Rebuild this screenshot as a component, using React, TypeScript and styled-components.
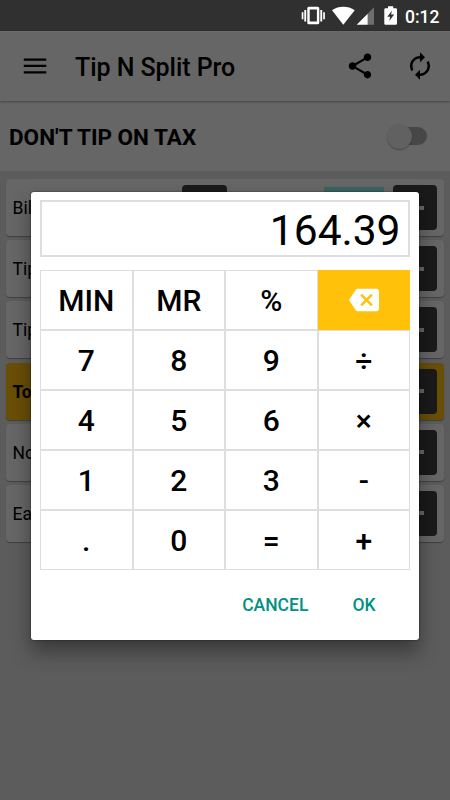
import React from "react";
import styled, { createGlobalStyle } from "styled-components";

const GlobalStyle = createGlobalStyle`
  * { box-sizing: border-box; }
  body { margin: 0; font-family: Roboto, sans-serif; color: #000; }
`;

const Screen = styled.div`
  position: relative;
  width: 450px;
  height: 800px;
  overflow: hidden;
  background: #5c5c5c;
`;

const StatusBar = styled.header`
  height: 31px;
  padding-right: 10px;
  display: flex;
  align-items: center;
  justify-content: flex-end;
  background: #303030;
  color: #fff;
`;

const Clock = styled.span`
  width: 35px;
  margin-left: 5px;
  padding-top: 2px;
  font-size: 17.5px;
  font-weight: 500;
  line-height: 20px;
  white-space: nowrap;
`;

const StatusIcons = styled.svg`
  display: block;
  flex: none;
  width: 100px;
  height: 31px;
`;

const AppBar = styled.div`
  position: relative;
  height: 70px;
  padding: 0 15px 1px 20px;
  display: flex;
  align-items: center;
  background: #666;
  border-top: 1px solid #6b6b6b;
  box-shadow: 0 1px 2px rgba(0, 0, 0, 0.35);
`;

const AppTitle = styled.h1`
  margin: 3px auto 0 25px;
  font-size: 25px;
  line-height: 30px;
  font-weight: 500;
  letter-spacing: -0.05px;
`;

const Icon = styled.svg<{ $size: number; $gap?: number }>`
  display: block;
  flex: none;
  width: ${(p) => p.$size}px;
  height: ${(p) => p.$size}px;
  margin-left: ${(p) => p.$gap ?? 0}px;
  fill: currentColor;
`;

const TaxBar = styled.div`
  height: 70px;
  padding: 2px 22px 0 9px;
  display: flex;
  align-items: center;
  justify-content: space-between;
  background: #666;
  font-size: 22.5px;
  font-weight: 700;
`;

const SwitchTrack = styled.div`
  width: 36px;
  height: 18px;
  margin-right: 1px;
  margin-top: -2px;
  border-radius: 9px;
  display: flex;
  align-items: center;
  background: #474747;
`;

const SwitchThumb = styled.div`
  width: 25px;
  height: 25px;
  margin-left: -4px;
  flex: none;
  border-radius: 50%;
  background: #616161;
  box-shadow: 0 1px 1.5px rgba(0, 0, 0, 0.3);
`;

const Rows = styled.div`
  padding: 8px 6.5px 0 6px;
  display: flex;
  flex-direction: column;
  gap: 4.2px;
`;

const Row = styled.div<{ $accent?: boolean }>`
  height: 57px;
  padding: 0 6.5px;
  display: flex;
  align-items: center;
  border-radius: 4px;
  background: ${(p) => (p.$accent ? "#694e06" : "#666")};
  font-size: 17.5px;
  font-weight: ${(p) => (p.$accent ? 700 : 400)};
  box-shadow: 0 1px 1px rgba(0, 0, 0, 0.3);
`;

const RowLabel = styled.span`
  width: 169.5px;
  padding-top: 1px;
`;

const Step = styled.span`
  width: 44.5px;
  height: 45px;
  display: flex;
  align-items: center;
  justify-content: center;
  border-radius: 4px;
  background: #1a1a1a;

  &::after {
    content: "";
    width: 19px;
    height: 4px;
    background: #666;
  }
`;

const Amount = styled.span`
  width: 60px;
  height: 41px;
  margin: 0 8.5px 0 auto;
  background: #386460;
`;

const Dialog = styled.section`
  position: absolute;
  left: 31px;
  top: 192px;
  width: 388px;
  height: 448px;
  padding: 8px 9px 0;
  border-radius: 3px;
  background: #fff;
  box-shadow: 0 0 2px rgba(0, 0, 0, 0.65), 0 12px 20px rgba(0, 0, 0, 0.38);
`;

const Display = styled.output`
  height: 57px;
  padding: 4px 7.5px 0 0;
  display: flex;
  align-items: center;
  justify-content: flex-end;
  border: 2px solid #dedede;
  font-size: 42.5px;
  line-height: 50px;
`;

const Keypad = styled.div`
  width: 370px;
  height: 300px;
  margin-top: 13px;
  padding: 1px;
  display: grid;
  grid-template-columns: repeat(4, 1fr);
  grid-template-rows: repeat(5, 1fr);
  gap: 2px;
  background: #dedede;
`;

const Key = styled.button<{ $accent?: boolean }>`
  margin: 0;
  padding: ${(p) => (p.$accent ? "0" : "2px 0 0")};
  display: flex;
  align-items: center;
  justify-content: center;
  border: 0;
  background: ${(p) => (p.$accent ? "#ffc10a" : "#fff")};
  box-shadow: ${(p) => (p.$accent ? "0 0 0 1px #ffc10a" : "none")};
  color: ${(p) => (p.$accent ? "#fff" : "#000")};
  font: 500 30px/36px Roboto, sans-serif;
`;

const Actions = styled.div`
  height: 69px;
  padding-right: 34.5px;
  display: flex;
  align-items: center;
  justify-content: flex-end;
  gap: 44px;
`;

const Action = styled.button`
  margin: 0;
  padding: 0;
  border: 0;
  background: none;
  color: #009182;
  font: 500 17.5px/20px Roboto, sans-serif;
`;

const rows = ["Bill", "Tip %", "Tip", "Total", "No. of people", "Each"];
const keys = [
  "MIN", "MR", "%", "backspace",
  "7", "8", "9", "÷",
  "4", "5", "6", "×",
  "1", "2", "3", "-",
  ".", "0", "=", "+",
];

const BackspaceIcon = () => (
  <Icon $size={30} viewBox="0 0 24 24">
    <path d="M22 3H7c-.69 0-1.23.35-1.59.88L0 12l5.41 8.11c.36.53.9.89 1.59.89h15c1.1 0 2-.9 2-2V5c0-1.1-.9-2-2-2zm-3 12.59L17.59 17 14 13.41 10.41 17 9 15.59 12.59 12 9 8.41 10.41 7 14 10.59 17.59 7 19 8.41 15.41 12 19 15.59z" />
  </Icon>
);

export default function App() {
  return (
    <>
      <GlobalStyle />
      <Screen>
        <StatusBar>
          <StatusIcons viewBox="0 0 100 31">
            <g fill="#fff">
              <path d="M8.800 6.700h9q1.500 0 1.500 1.500v14.500q0 1.500-1.500 1.500h-9q-1.500 0-1.500-1.500V8.200q0-1.500 1.500-1.500zM9.700 9.500v12h7.200v-12z" fillRule="evenodd" />
              <path d="M4.300 10h1.900v11.500H4.300zM1.700 12.200h1.700v7H1.700zM20.300 10h1.900v11.500h-1.900zM23.200 12.200h1.700v7h-1.700z" />
              <path d="M32 10.200C38.500 5.600 48.200 5.600 54.700 10.200L43.300 24.700z" />
              <path d="M56.700 24.800 67.700 13.800v11z" />
              <path d="M67.700 13.800 74 7.300v17.500h-6.300z" opacity=".3" />
              <path d="M85.500 8.300H88V6.200h5.200v2.100h2.600q1.200 0 1.200 1.200v14q0 1.300-1.200 1.300H85.500q-1.200 0-1.200-1.300v-14q0-1.200 1.200-1.200z" />
            </g>
            <path d="M92 10.500 87.300 16.700h2.900L89.200 21l5-6.500h-3.200z" fill="#303030" />
          </StatusIcons>
          <Clock>0:12</Clock>
        </StatusBar>

        <AppBar>
          <Icon $size={30} viewBox="0 0 24 24">
            <path d="M3 18h18v-1.800H3zm0-5.200h18V11H3zm0-6.800v1.800h18V6z" />
          </Icon>
          <AppTitle>Tip N Split Pro</AppTitle>
          <Icon $size={30} viewBox="0 0 24 24">
            <path d="M18 16.080c-.76 0-1.440.3-1.960.77L8.910 12.700c.05-.23.09-.46.09-.7s-.04-.47-.09-.7l7.050-4.110c.54.5 1.250.81 2.040.81 1.660 0 3-1.340 3-3s-1.340-3-3-3-3 1.340-3 3c0 .24.04.47.09.7L8.040 9.810C7.500 9.310 6.790 9 6 9c-1.660 0-3 1.340-3 3s1.340 3 3 3c.79 0 1.500-.31 2.040-.81l7.120 4.160c-.05.21-.08.43-.08.65 0 1.610 1.310 2.920 2.920 2.920s2.920-1.310 2.920-2.920-1.310-2.920-2.920-2.920z" />
          </Icon>
          <Icon $size={30} $gap={30} viewBox="0 0 24 24">
            <path d="M12 6v3l4-4-4-4v3c-4.420 0-8 3.580-8 8 0 1.570.46 3.030 1.240 4.260L6.700 14.800c-.45-.83-.7-1.790-.7-2.800 0-3.310 2.690-6 6-6zm6.760 1.740L17.300 9.200c.44.840.7 1.790.7 2.800 0 3.310-2.690 6-6 6v-3l-4 4 4 4v-3c4.420 0 8-3.580 8-8 0-1.570-.46-3.030-1.240-4.260z" />
          </Icon>
        </AppBar>

        <TaxBar>
          <span>DON'T TIP ON TAX</span>
          <SwitchTrack><SwitchThumb /></SwitchTrack>
        </TaxBar>

        <Rows>
          {rows.map((label) => (
            <Row key={label} $accent={label === "Total"}>
              <RowLabel>{label}</RowLabel>
              <Step />
              <Amount />
              <Step />
            </Row>
          ))}
        </Rows>

        <Dialog>
          <Display>164.39</Display>
          <Keypad>
            {keys.map((key) => (
              <Key key={key} $accent={key === "backspace"} aria-label={key}>
                {key === "backspace" ? <BackspaceIcon /> : key}
              </Key>
            ))}
          </Keypad>
          <Actions>
            <Action>CANCEL</Action>
            <Action>OK</Action>
          </Actions>
        </Dialog>
      </Screen>
    </>
  );
}
